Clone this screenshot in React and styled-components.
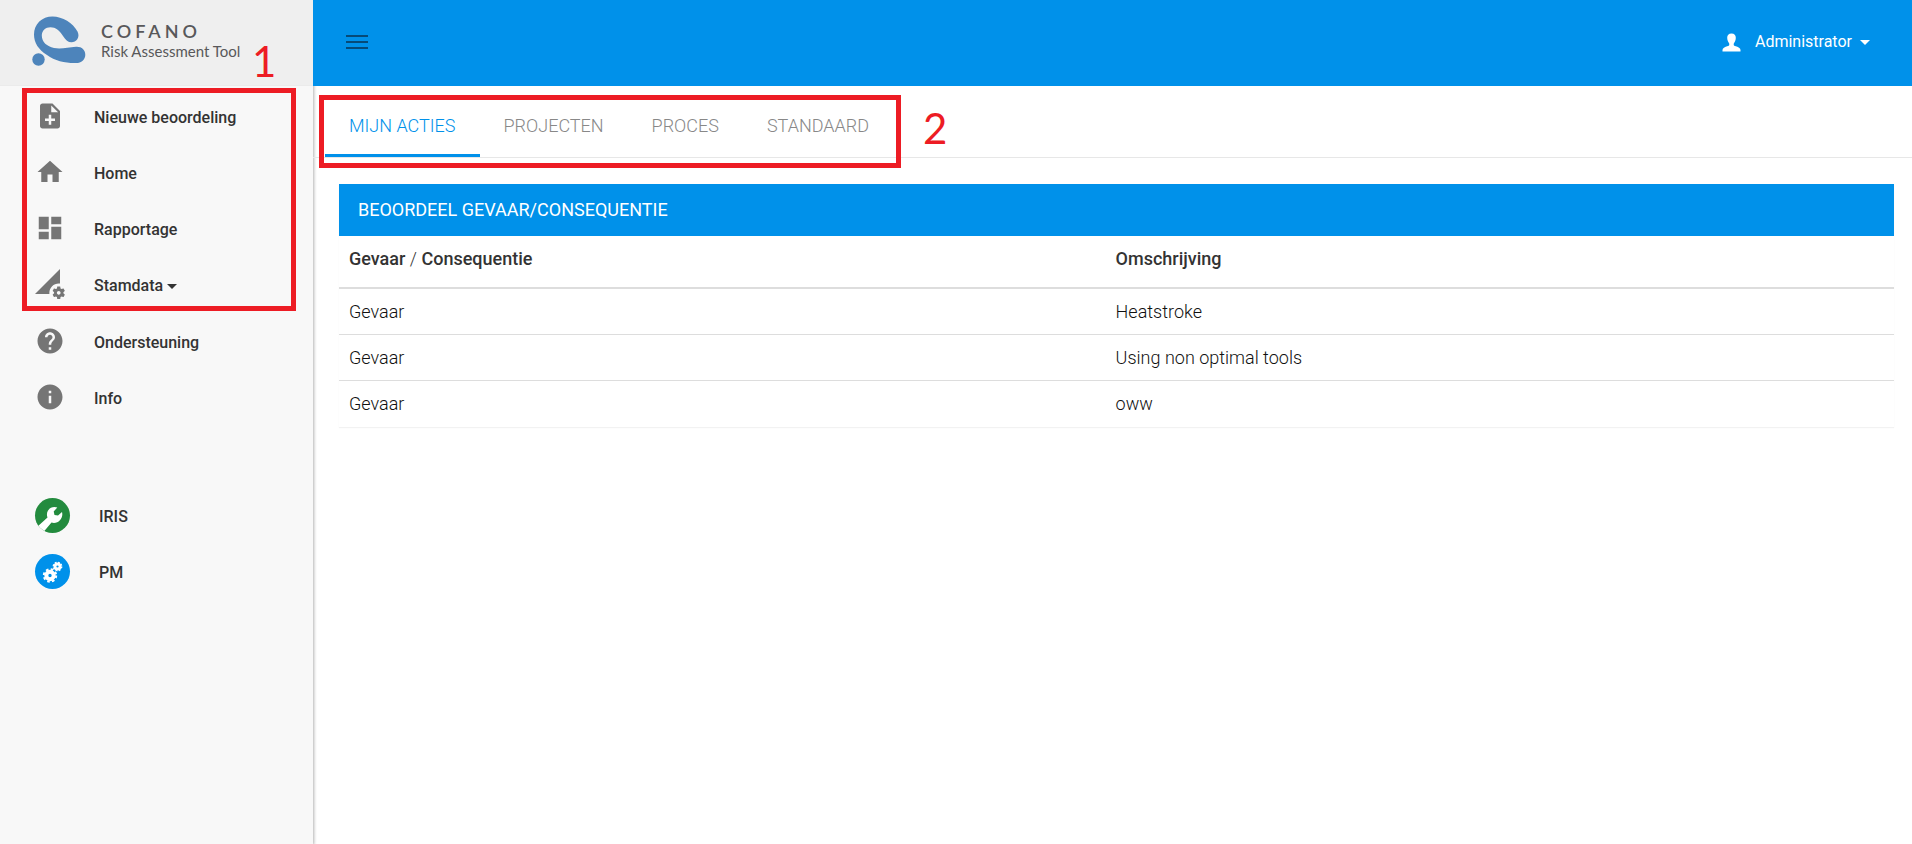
import React from 'react';
import styled, { createGlobalStyle } from 'styled-components';
import {
  MdNoteAdd,
  MdHome,
  MdDashboard,
  MdPermDataSetting,
  MdHelp,
  MdInfo,
} from 'react-icons/md';

const blue = '#0091ea';
const red = '#ed1c24';

const GlobalStyle = createGlobalStyle`
  *, *::before, *::after { box-sizing: border-box; }
  body {
    margin: 0;
    background: #fff;
    color: #333;
    font-family: Roboto, "Liberation Sans", sans-serif;
    font-size: 18px;
  }
  a { color: inherit; text-decoration: none; }
  button {
    font: inherit;
    color: inherit;
    background: none;
    border: 0;
    padding: 0;
    cursor: pointer;
  }
`;

const Page = styled.div`
  display: grid;
  grid-template-columns: 313px minmax(0, 1fr);
  min-height: 100vh;
`;

const Sidebar = styled.aside`
  display: flex;
  flex-direction: column;
  background: #f8f8f8;
  box-shadow: 0 0 3px 1px rgba(0, 0, 0, 0.3);
`;

const Brand = styled.a`
  display: flex;
  align-items: flex-start;
  height: 86px;
  padding: 15px 0 0 32px;
  gap: 15px;
  background: #efefef;
  border-bottom: 1px solid #ebebeb;
`;

const BrandText = styled.span`
  display: flex;
  flex-direction: column;
  padding-top: 6px;
  font-family: Lato, sans-serif;
  color: #58585a;
`;

const BrandName = styled.span`
  font-size: 18px;
  font-weight: 600;
  line-height: 20px;
  letter-spacing: 4px;
`;

const BrandSub = styled.span`
  font-size: 15px;
  line-height: 20px;
`;

const NavGroup = styled.nav`
  position: relative;
  display: flex;
  flex-direction: column;
  margin-top: ${(p) => p.$space}px;
`;

const NavItem = styled.a`
  display: flex;
  align-items: center;
  gap: 29px;
  height: 56px;
  padding-left: 35px;
  font-size: 16px;
  font-weight: 500;
  line-height: 20px;

  > svg {
    color: #757575;
  }
`;

const NavLabel = styled.span`
  padding-top: 3px;
`;

const AppBadge = styled.span`
  display: flex;
  align-items: center;
  justify-content: center;
  width: 35px;
  height: 35px;
  border-radius: 50%;
  overflow: hidden;
  color: #fff;
  background: ${(p) => p.$color};
`;

const Caret = styled.span`
  display: inline-block;
  margin-left: ${(p) => p.$gap}px;
  vertical-align: middle;
  border: 5px solid transparent;
  border-top-color: currentColor;
  border-bottom: 0;
`;

const Main = styled.div`
  display: flex;
  flex-direction: column;
`;

const TopBar = styled.header`
  position: relative;
  display: flex;
  align-items: center;
  justify-content: space-between;
  height: 86px;
  padding: 0 42px 2px 33px;
  background: ${blue};
  color: #fff;
`;

const MenuButton = styled.button`
  display: grid;
  gap: 4px;
  width: 22px;
`;

const MenuBar = styled.span`
  height: 2px;
  background: #064a78;
`;

const UserButton = styled.button`
  display: flex;
  align-items: center;
  font-size: 16px;
  line-height: 20px;

  svg {
    margin-right: 14px;
  }
`;

const TabBar = styled.div`
  display: flex;
  padding-left: 12px;
  border-bottom: 1px solid #e7e7e7;
`;

const Tabs = styled.div`
  position: relative;
  display: flex;
`;

const Tab = styled.button`
  height: 71px;
  padding: 10px 24px 0;
  font-weight: 300;
  color: ${(p) => (p.$active ? blue : '#888')};
  border-bottom: 3px solid ${(p) => (p.$active ? blue : 'transparent')};
`;

const Content = styled.main`
  padding: 26px 18px 26px 26px;
`;

const Panel = styled.section`
  box-shadow: 0 1px 1px rgba(0, 0, 0, 0.05);
`;

const PanelTitle = styled.h2`
  margin: 0;
  padding: 15px 19px;
  font-size: 18px;
  font-weight: 400;
  line-height: 22px;
  color: #fff;
  background: ${blue};
`;

const Table = styled.table`
  width: 100%;
  table-layout: fixed;
  border-collapse: collapse;
  text-align: left;
`;

const HeadCell = styled.th`
  width: ${(p) => p.$width};
  height: 52px;
  padding: 10px 10px 16px;
  line-height: 25px;
  font-weight: 500;
  border-bottom: 2px solid #ddd;
`;

const Slash = styled.span`
  font-weight: 300;
`;

const Cell = styled.td`
  height: 46px;
  padding: 10px;
  line-height: 25px;
  font-weight: 300;
  color: #111;
  border-top: 1px solid #ddd;
`;

const Highlight = styled.div`
  position: absolute;
  inset: ${(p) => p.$inset};
  border: 5px solid ${red};
  pointer-events: none;
`;

const Marker = styled.span`
  position: absolute;
  top: ${(p) => p.$top}px;
  left: ${(p) => p.$left};
  font-family: Lato, sans-serif;
  font-size: 42px;
  line-height: 42px;
  color: ${red};
  pointer-events: none;
`;

const Logo = () => (
  <svg width="54" height="52" viewBox="0 0 54 52" aria-hidden="true">
    <path
      fill="#4d84bb"
      d="M2 19.500C2 9 10 1.500 20.500 1.500C30.500 1.500 41 8 45.500 16.500C48.500 22.500 44 27.300 39.500 27.300C36 27.300 33.800 25 31 21C27.500 15.500 23.500 12.300 18.500 12.300C13.500 12.300 9.800 15.700 9.800 20.500C9.800 27 15 31.500 22 33C29 34.400 36 32.300 44 31.700C49.500 31.300 53.300 34.700 53.300 39.700C53.300 44.500 49.500 48 44 48C34 48.300 23 46 15 40C6.500 34.500 2 28 2 19.500Z"
    />
    <circle cx="6.500" cy="44.500" r="6.200" fill="#4d84bb" />
  </svg>
);

const UserIcon = () => (
  <svg width="19" height="19" viewBox="0 0 19 19" fill="currentColor" aria-hidden="true">
    <path d="M9.500 .5C12.400 .5 13.800 2.200 13.800 4.800C13.800 7.300 12.800 9.300 11.800 10.400C11.500 11.900 11.800 12.500 13 13C16.500 14.200 18.500 15 18.500 17V18.500H.5V17C.5 15 2.500 14.200 6 13C7.200 12.500 7.500 11.900 7.200 10.400C6.200 9.300 5.200 7.300 5.200 4.800C5.200 2.200 6.600 .5 9.500 .5Z" />
  </svg>
);

const WrenchIcon = () => (
  <svg width="35" height="35" viewBox="0 0 35 35" fill="currentColor" aria-hidden="true">
    <path d="M2 29L12.500 19.500C10.500 14 14 9 19.500 9C20.500 9 21.500 9.200 22.300 9.500L18.700 13.500L19.500 17L23 17.500L27 14C28.500 19.500 24.500 25 19 25C18 25 17.200 24.800 16.500 24.500L8.500 34H2Z" />
  </svg>
);

const CogsIcon = () => (
  <svg width="35" height="35" viewBox="0 0 35 35" fill="none" stroke="currentColor" aria-hidden="true">
    <circle cx="15" cy="21.500" r="3.700" strokeWidth="4" />
    <circle cx="15" cy="21.500" r="6.200" strokeWidth="2" strokeDasharray="2.600 2.270" />
    <circle cx="22.500" cy="12.500" r="2.500" strokeWidth="2.800" />
    <circle cx="22.500" cy="12.500" r="4.200" strokeWidth="1.400" strokeDasharray="1.800 1.500" />
  </svg>
);

const mainLinks = [
  { label: 'Nieuwe beoordeling', Icon: MdNoteAdd },
  { label: 'Home', Icon: MdHome },
  { label: 'Rapportage', Icon: MdDashboard },
  { label: 'Stamdata', Icon: MdPermDataSetting, menu: true },
];

const helpLinks = [
  { label: 'Ondersteuning', Icon: MdHelp },
  { label: 'Info', Icon: MdInfo },
];

const appLinks = [
  { label: 'IRIS', Icon: WrenchIcon, color: '#238b3e' },
  { label: 'PM', Icon: CogsIcon, color: blue },
];

const tabs = ['MIJN ACTIES', 'PROJECTEN', 'PROCES', 'STANDAARD'];

const rows = [
  ['Gevaar', 'Heatstroke'],
  ['Gevaar', 'Using non optimal tools'],
  ['Gevaar', 'oww'],
];

const NavLink = ({ label, Icon, menu }) => (
  <NavItem href="#">
    <Icon size={30} />
    <NavLabel>
      {label}
      {menu && <Caret $gap={4} />}
    </NavLabel>
  </NavItem>
);

export default function App() {
  return (
    <>
      <GlobalStyle />
      <Page>
        <Sidebar>
          <Brand href="#">
            <Logo />
            <BrandText>
              <BrandName>COFANO</BrandName>
              <BrandSub>Risk Assessment Tool</BrandSub>
            </BrandText>
          </Brand>
          <NavGroup $space={2} aria-label="Hoofdmenu">
            {mainLinks.map((link) => (
              <NavLink key={link.label} {...link} />
            ))}
            <Highlight $inset="0 17px 1px 22px" />
            <Marker $top={-48} $left="252px">1</Marker>
          </NavGroup>
          <NavGroup $space={1} aria-label="Hulp">
            {helpLinks.map((link) => (
              <NavLink key={link.label} {...link} />
            ))}
          </NavGroup>
          <NavGroup $space={62} aria-label="Applicaties">
            {appLinks.map(({ label, Icon, color }) => (
              <NavItem key={label} href="#">
                <AppBadge $color={color}>
                  <Icon />
                </AppBadge>
                <NavLabel>{label}</NavLabel>
              </NavItem>
            ))}
          </NavGroup>
        </Sidebar>
        <Main>
          <TopBar>
            <MenuButton aria-label="Menu">
              <MenuBar />
              <MenuBar />
              <MenuBar />
            </MenuButton>
            <UserButton>
              <UserIcon />
              Administrator
              <Caret $gap={8} />
            </UserButton>
          </TopBar>
          <TabBar>
            <Tabs role="tablist">
              {tabs.map((tab, i) => (
                <Tab key={tab} role="tab" aria-selected={i === 0} $active={i === 0}>
                  {tab}
                </Tab>
              ))}
              <Highlight $inset="9px -8px -11px -6px" />
              <Marker $top={21} $left="calc(100% + 30px)">2</Marker>
            </Tabs>
          </TabBar>
          <Content>
            <Panel>
              <PanelTitle>BEOORDEEL GEVAAR/CONSEQUENTIE</PanelTitle>
              <Table>
                <thead>
                  <tr>
                    <HeadCell $width="49.3%">
                      Gevaar <Slash>/</Slash> Consequentie
                    </HeadCell>
                    <HeadCell>Omschrijving</HeadCell>
                  </tr>
                </thead>
                <tbody>
                  {rows.map(([kind, text]) => (
                    <tr key={text}>
                      <Cell>{kind}</Cell>
                      <Cell>{text}</Cell>
                    </tr>
                  ))}
                </tbody>
              </Table>
            </Panel>
          </Content>
        </Main>
      </Page>
    </>
  );
}
